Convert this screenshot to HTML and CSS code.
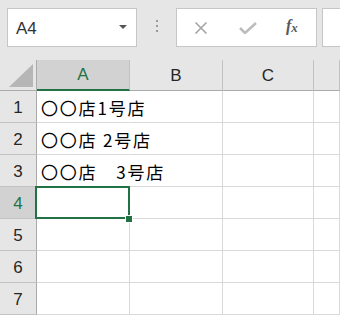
FILE: index.html
```html
<!DOCTYPE html>
<html lang="ja">
  <head>
    <meta charset="UTF-8">
    <title>Book1 - Excel</title>
    <link rel="stylesheet" href="styles.css">
  </head>
  <body>
<div class="toolbar">
  <div class="name-box">
    <span class="name-text">A4</span>
    <span class="name-arrow"></span>
  </div>
  <div class="grip">
    <span></span><span></span><span></span>
  </div>
  <div class="fx-buttons">
    <svg class="icon-cancel" width="14" height="12" viewBox="0 0 14 12">
      <path d="M1.5 0.5 L12.5 11.5 M12.5 0.5 L1.5 11.5" stroke="#a6a6a6" stroke-width="1.6" fill="none"/>
    </svg>
    <svg class="icon-enter" width="18" height="12" viewBox="0 0 18 12">
      <path d="M1 6 L6 11 L17 1" stroke="#bdbdbd" stroke-width="2.6" fill="none"/>
    </svg>
    <span class="icon-fx">f<sub>x</sub></span>
  </div>
  <div class="formula-input"></div>
</div>

<!--Worksheet grid-->
<div class="sheet">
  <div class="corner">
    <svg width="24" height="23" viewBox="0 0 24 23">
      <polygon points="24,0 24,23 0,23" fill="#b6b6b6"/>
    </svg>
  </div>
  <div class="col-head col-sel">A</div>
  <div class="col-head">B</div>
  <div class="col-head">C</div>
  <div class="col-head"></div>

  <div class="row-head">1</div>
  <div class="cell spill">〇〇店1号店</div>
  <div class="cell"></div>
  <div class="cell"></div>
  <div class="cell"></div>

  <div class="row-head">2</div>
  <div class="cell spill">〇〇店 2号店</div>
  <div class="cell"></div>
  <div class="cell"></div>
  <div class="cell"></div>

  <div class="row-head">3</div>
  <div class="cell spill">〇〇店　3号店</div>
  <div class="cell"></div>
  <div class="cell"></div>
  <div class="cell"></div>

  <div class="row-head row-sel">4</div>
  <div class="cell"></div>
  <div class="cell"></div>
  <div class="cell"></div>
  <div class="cell"></div>

  <div class="row-head">5</div>
  <div class="cell"></div>
  <div class="cell"></div>
  <div class="cell"></div>
  <div class="cell"></div>

  <div class="row-head">6</div>
  <div class="cell"></div>
  <div class="cell"></div>
  <div class="cell"></div>
  <div class="cell"></div>

  <div class="row-head">7</div>
  <div class="cell"></div>
  <div class="cell"></div>
  <div class="cell"></div>
  <div class="cell"></div>

  <div class="selection"></div>
  <div class="fill-handle"></div>
</div>
  </body>
</html>
```

FILE: styles.css
```css
* {
  box-sizing: border-box;
}

body {
  margin: 0;
  width: 340px;
  height: 315px;
  overflow: hidden;
  background: #ffffff;
  font-family: "Liberation Sans", Arial, sans-serif;
}

.toolbar {
  display: flex;
  align-items: flex-start;
  height: 60px;
  padding: 8px 0 0 7px;
  background: #e6e6e6;
}

.name-box {
  display: flex;
  align-items: center;
  justify-content: space-between;
  width: 130px;
  height: 39px;
  padding: 0 9px 0 8px;
  background: #ffffff;
  border: 1px solid #c6c6c6;
}
.name-text {
  font-size: 17px;
  color: #333333;
  padding-top: 3px;
}
.name-arrow {
  width: 0;
  height: 0;
  margin-top: -2px;
  border-left: 4px solid transparent;
  border-right: 4px solid transparent;
  border-top: 4px solid #555555;
}

.grip {
  display: flex;
  flex-direction: column;
  align-items: center;
  gap: 3px;
  width: 39px;
  padding-top: 12px;
}
.grip span {
  width: 2px;
  height: 2px;
  background: #9a9a9a;
}

.fx-buttons {
  display: flex;
  align-items: center;
  width: 141px;
  height: 39px;
  padding: 0 0 0 17px;
  background: #ffffff;
  border: 1px solid #c6c6c6;
}
.icon-cancel {
  margin-right: 31px;
}
.icon-enter {
  margin-right: 29px;
}
.icon-fx {
  font-family: "Liberation Serif", "DejaVu Serif", serif;
  font-style: italic;
  font-weight: bold;
  font-size: 16px;
  color: #595959;
  margin-top: -2px;
}
.icon-fx sub {
  font-size: 13px;
  vertical-align: -1px;
}

.formula-input {
  flex: 1;
  height: 39px;
  margin-left: 5px;
  background: #ffffff;
  border: 1px solid #c6c6c6;
  border-right: none;
}

.sheet {
  position: relative;
  display: grid;
  grid-template-columns: 37px 93px 93px 91px 1fr;
  grid-template-rows: 31px repeat(7, 32px);
}

.corner {
  display: flex;
  align-items: flex-end;
  justify-content: flex-end;
  padding: 0 3px 3px 0;
  background: #e6e6e6;
  border-right: 1px solid #ababab;
  border-bottom: 1px solid #ababab;
}

.col-head {
  display: flex;
  align-items: center;
  justify-content: center;
  padding-top: 1px;
  font-size: 17px;
  color: #262626;
  background: #e6e6e6;
  border-right: 1px solid #c2c2c2;
  border-bottom: 1px solid #ababab;
}
.col-sel {
  background: #d2d2d2;
  color: #217346;
  border-bottom: 2px solid #217346;
}

.row-head {
  display: flex;
  align-items: center;
  justify-content: center;
  padding-top: 2px;
  font-size: 17px;
  color: #262626;
  background: #e6e6e6;
  border-right: 1px solid #ababab;
  border-bottom: 1px solid #c2c2c2;
}
.row-sel {
  background: #d2d2d2;
  color: #217346;
}

.cell {
  display: flex;
  align-items: center;
  padding: 2px 0 0 4px;
  white-space: nowrap;
  font-family: "Noto Sans CJK JP", sans-serif;
  font-size: 17px;
  letter-spacing: 1.8px;
  color: #000000;
  border-right: 1px solid #d9d9d9;
  border-bottom: 1px solid #d9d9d9;
}
.spill {
  border-right-color: transparent;
}

.selection {
  position: absolute;
  left: 35px;
  top: 126px;
  width: 95px;
  height: 33px;
  border: 2px solid #217346;
}
.fill-handle {
  position: absolute;
  left: 125px;
  top: 155px;
  width: 8px;
  height: 8px;
  background: #217346;
  border: 1px solid #ffffff;
}
```
